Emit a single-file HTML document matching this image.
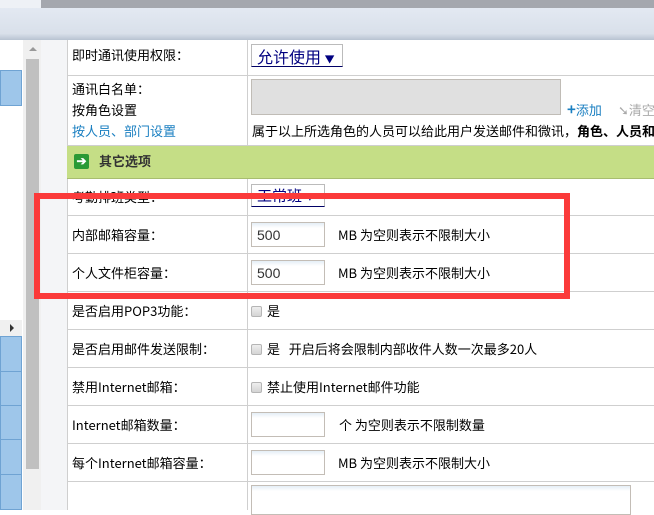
<!DOCTYPE html>
<html><head><meta charset="utf-8"><style>
*{margin:0;padding:0;box-sizing:border-box}
body{width:654px;height:510px;overflow:hidden;background:#fff;position:relative;font-family:"Liberation Sans","Noto Sans CJK SC",sans-serif;font-size:13px;color:#000}
.a{position:absolute}
.t{position:absolute;white-space:nowrap;font-family:"WenQuanYi Zen Hei","Noto Sans CJK SC",sans-serif;font-size:13px;line-height:14px}
.h{position:absolute;left:67px;right:0;height:1px;background:#cfcfcf}
.in{position:absolute;width:74px;height:25px;border:1px solid #c3bdb6;background:linear-gradient(#e4eef6,#fff 5px);font-size:14px;color:#333;padding:4px 5px}
.cb{position:absolute;width:11px;height:11px;border:1px solid #b5b5b5;border-radius:2px;background:linear-gradient(#eee,#d4d4d4)}
.blue{position:absolute;left:0;width:22px;background:#9ec6ea;border:1px solid #6fa3d3}
</style></head><body>
<div class="a" style="left:0;top:0;width:41px;height:8px;background:#eef1f6"></div>
<div class="a" style="left:41px;top:0;right:0;height:8px;background:#a4a7ae"></div>
<div class="a" style="left:0;top:8px;right:0;height:32px;background:linear-gradient(#e3e9f2,#d9e0ea 80%,#b8c3d1)"></div>
<div class="a" style="left:0;top:40px;width:26px;height:470px;background:#fff;border-right:1px solid #6fa3d3"></div>
<div class="blue" style="top:70px;height:36px"></div>
<div class="a" style="left:0;top:320px;width:22px;height:16px;background:#f0f0f0"></div>
<div class="a" style="left:10px;top:324px;width:0;height:0;border-left:4px solid #333;border-top:4px solid transparent;border-bottom:4px solid transparent"></div>
<div class="blue" style="top:336px;height:36px"></div>
<div class="blue" style="top:371px;height:35px"></div>
<div class="blue" style="top:405px;height:35px"></div>
<div class="blue" style="top:439px;height:36px"></div>
<div class="blue" style="top:474px;height:36px"></div>
<div class="a" style="left:23px;top:40px;width:18px;height:470px;background:#f0f0f0"></div>
<div class="a" style="left:29px;top:47px;border-bottom:4px solid #999;border-left:4px solid transparent;border-right:4px solid transparent"></div>
<div class="a" style="left:26px;top:59px;width:13px;height:410px;background:#c0c0c0"></div>
<div class="a" style="left:41px;top:40px;width:26px;height:470px;background:#f4f5f7"></div>
<div class="a" style="left:67px;top:40px;width:1px;height:470px;background:#cfcfcf"></div>
<div class="a" style="left:247px;top:40px;width:1px;height:470px;background:#cfcfcf"></div>
<div class="a" style="left:67px;top:145px;right:0;height:34px;background:#c5de86;border-top:1px solid #cfcfcf;border-bottom:1px solid #a8bd70"></div>
<div class="h" style="top:75px"></div>
<div class="h" style="top:215px"></div><div class="h" style="top:253px"></div><div class="h" style="top:291px"></div><div class="h" style="top:329px"></div><div class="h" style="top:367px"></div><div class="h" style="top:405px"></div><div class="h" style="top:443px"></div><div class="h" style="top:481px"></div>

<div class="t" style="left:72px;top:48px">即时通讯使用权限：</div>
<div class="a" style="left:251px;top:44px;width:92px;height:23px;border:1px solid #bbb;border-bottom:1px solid #000066;color:#000080;font-size:16px;padding:1px 5px;font-family:'Noto Sans CJK SC',sans-serif;line-height:20px">允许使用 <span style="font-size:10px">▼</span></div>
<div class="t" style="left:72px;top:82px">通讯白名单：</div>
<div class="t" style="left:72px;top:103px">按角色设置</div>
<div class="t" style="left:72px;top:124px;color:#1a7fc1">按人员、部门设置</div>
<div class="a" style="left:251px;top:79px;width:310px;height:36px;background:#e0e0e0;border:1px solid #c0bcb6"></div>
<div class="t" style="left:567px;top:103px;color:#1a7fc1"><b style="font-size:15px">+</b>添加</div>
<div class="t" style="left:618px;top:103px;color:#aaa">➘清空</div>
<div class="t" style="left:252px;top:124px">属于以上所选角色的人员可以给此用户发送邮件和微讯，<b>角色、人员和</b></div>
<div class="a" style="left:74px;top:154px;width:15px;height:15px;background:#2a9a35;border-radius:2px;color:#fff;font-size:12px;line-height:15px;text-align:center;font-weight:bold">➔</div>
<div class="t" style="left:99px;top:154px;font-weight:bold;color:#333">其它选项</div>
<div class="t" style="left:72px;top:190px">考勤排班类型：</div>
<div class="a" style="left:251px;top:184px;width:74px;height:23px;border:1px solid #bbb;border-bottom:1px solid #000066;color:#000080;font-size:15px;padding:0 5px">工常班 ▾</div>
<div class="t" style="left:72px;top:228px">内部邮箱容量：</div>
<div class="in" style="left:251px;top:222px">500</div>
<div class="t" style="left:338px;top:228px">MB 为空则表示不限制大小</div>
<div class="t" style="left:72px;top:266px">个人文件柜容量：</div>
<div class="in" style="left:251px;top:260px">500</div>
<div class="t" style="left:338px;top:266px">MB 为空则表示不限制大小</div>
<div class="t" style="left:72px;top:304px">是否启用POP3功能：</div>
<div class="cb" style="left:251px;top:306px"></div><div class="t" style="left:267px;top:304px">是</div>
<div class="t" style="left:72px;top:342px">是否启用邮件发送限制：</div>
<div class="cb" style="left:251px;top:344px"></div><div class="t" style="left:267px;top:342px">是&nbsp;&nbsp;&nbsp;开启后将会限制内部收件人数一次最多20人</div>
<div class="t" style="left:72px;top:380px">禁用Internet邮箱：</div>
<div class="cb" style="left:251px;top:382px"></div><div class="t" style="left:267px;top:380px">禁止使用Internet邮件功能</div>
<div class="t" style="left:72px;top:418px">Internet邮箱数量：</div>
<div class="in" style="left:251px;top:412px"></div>
<div class="t" style="left:339px;top:418px">个 为空则表示不限制数量</div>
<div class="t" style="left:72px;top:456px">每个Internet邮箱容量：</div>
<div class="in" style="left:251px;top:450px"></div>
<div class="t" style="left:338px;top:456px">MB 为空则表示不限制大小</div>
<div class="a" style="left:251px;top:485px;width:380px;height:30px;border:1px solid #c3bdb6;background:linear-gradient(#e4eef6,#fff 5px)"></div>

<div class="a" style="left:34px;top:193px;width:536px;height:106px;border:6px solid #fb3a3a"></div>
</body></html>
